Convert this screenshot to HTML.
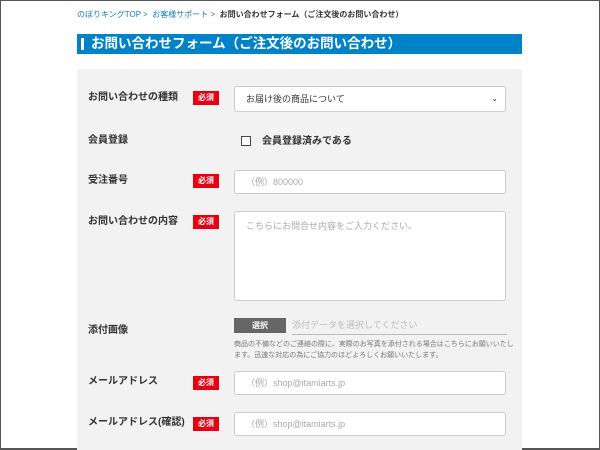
<!DOCTYPE html>
<html><head><meta charset="utf-8"><style>
*{box-sizing:border-box;margin:0;padding:0}
html,body{width:600px;height:450px;overflow:hidden;background:#fff}
body{font-family:"Liberation Sans","Noto Sans CJK JP",sans-serif;position:relative;border:1px solid #555;border-bottom-width:2px}
.a{position:absolute}
.bc{left:76px;top:8px;font-size:8px;color:#0e7cc2;white-space:nowrap;line-height:12px}
.bc b{color:#333;font-weight:bold}
.title{left:76px;top:33px;width:445px;height:20px;background:#0082c8;color:#fff;font-weight:bold;font-size:13.5px;line-height:20px;padding-left:14px}
.title:before{content:"";position:absolute;left:4px;top:4px;width:3px;height:12px;background:#fff}
.panel{left:76px;top:68px;width:445px;height:390px;background:#f2f2f2}
.lab{left:87px;font-size:10px;font-weight:bold;color:#333;line-height:12px}
.req{left:192px;width:26px;height:14px;background:#e60012;color:#fff;font-size:8px;font-weight:bold;text-align:center;line-height:14px}
.in{left:233px;width:272px;background:#fff;border:1px solid #ccc;border-radius:3px;font-size:9px;color:#aaa;padding-left:11px}
</style></head><body>
<div class="a bc">のぼりキングTOP &gt;&nbsp; お客様サポート &gt;&nbsp; <b>お問い合わせフォーム（ご注文後のお問い合わせ）</b></div>
<div class="a title">お問い合わせフォーム（ご注文後のお問い合わせ）</div>
<div class="a panel"></div>

<div class="a lab" style="top:91px">お問い合わせの種類</div>
<div class="a req" style="top:90px">必須</div>
<div class="a in" style="top:85px;height:26px;line-height:24px;color:#333">お届け後の商品について<span style="position:absolute;right:7px;font-size:8px">⌄</span></div>

<div class="a lab" style="top:134px">会員登録</div>
<div class="a" style="left:240px;top:135px;width:10px;height:10px;border:1.5px solid #444;background:#fff"></div>
<div class="a lab" style="left:261px;top:135px">会員登録済みである</div>

<div class="a lab" style="top:174px">受注番号</div>
<div class="a req" style="top:173px">必須</div>
<div class="a in" style="top:169px;height:24px;line-height:22px">（例）800000</div>

<div class="a lab" style="top:215px">お問い合わせの内容</div>
<div class="a req" style="top:214px">必須</div>
<div class="a in" style="top:210px;height:90px;padding-top:7px">こちらにお問合せ内容をご入力ください。</div>

<div class="a lab" style="top:324px">添付画像</div>
<div class="a" style="left:233px;top:317px;width:52px;height:15px;background:#666;color:#fff;font-size:8px;font-weight:bold;text-align:center;line-height:15px">選択</div>
<div class="a" style="left:291px;top:317px;font-size:9px;color:#bbb">添付データを選択してください</div>
<div class="a" style="left:291px;top:333px;width:215px;height:1px;background:#bbb"></div>
<div class="a" style="left:233px;top:338px;width:280px;font-size:7px;line-height:11px;color:#777">商品の不備などのご連絡の際に、実際のお写真を添付される場合はこちらにお願いいたします。迅速な対応の為にご協力のほどよろしくお願いいたします。</div>

<div class="a lab" style="top:375px">メールアドレス</div>
<div class="a req" style="top:375px">必須</div>
<div class="a in" style="top:370px;height:24px;line-height:22px">（例）shop@itamiarts.jp</div>

<div class="a lab" style="top:416px">メールアドレス(確認)</div>
<div class="a req" style="top:416px">必須</div>
<div class="a in" style="top:411px;height:24px;line-height:22px">（例）shop@itamiarts.jp</div>
</body></html>
